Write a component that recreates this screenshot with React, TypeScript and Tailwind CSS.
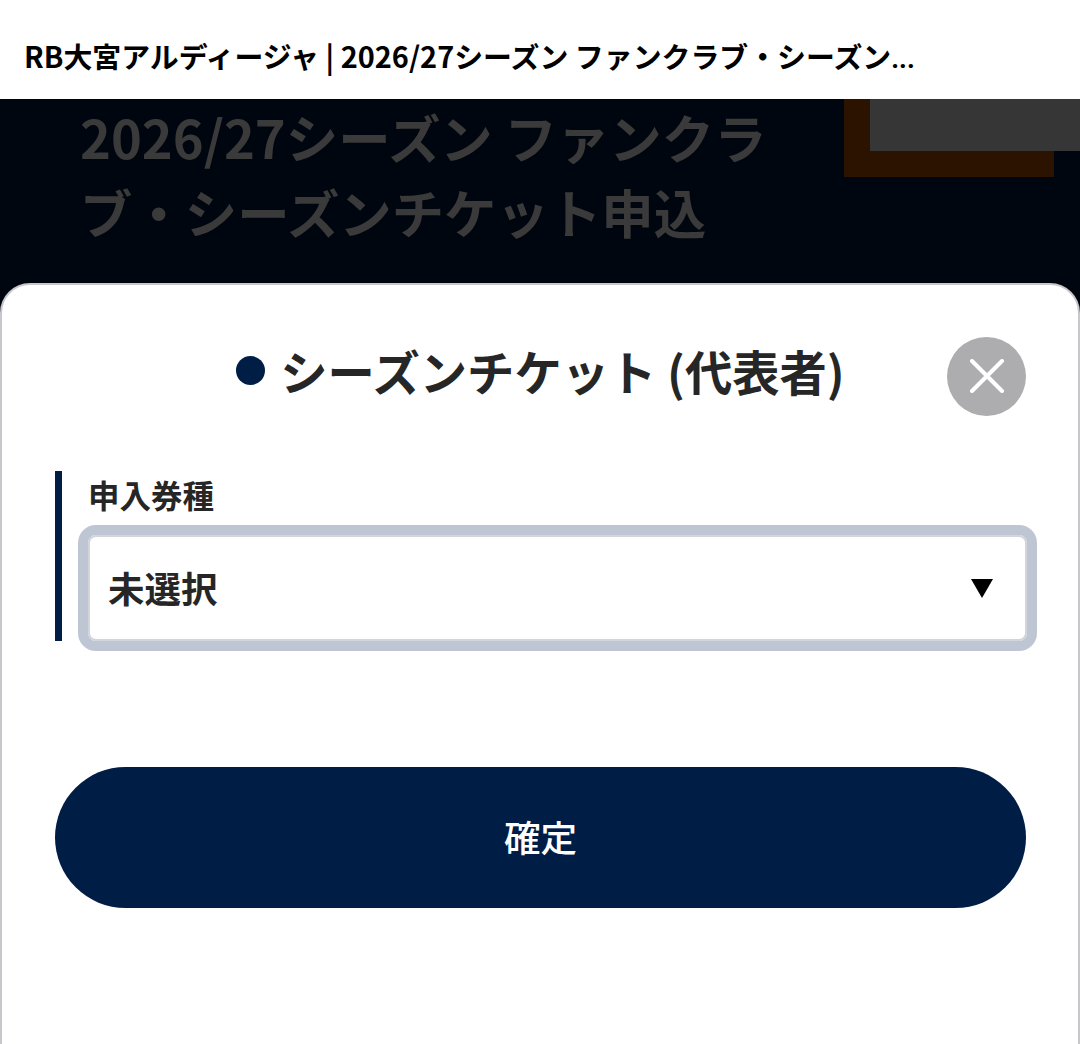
const jp = "font-['Noto_Sans_CJK_JP','Noto_Sans',sans-serif]";

const App = () => {
  return (
    <div className={`${jp} relative h-[1044px] w-[1080px] overflow-hidden bg-[#00060f]`}>
      {/* Browser title */}
      <header className="flex h-[99px] items-center bg-white pl-6 pt-[14px]">
        <p className="whitespace-nowrap text-[28.9px] font-bold leading-none text-black">
          RB大宮アルディージャ | 2026/27シーズン ファンクラブ・シーズン<span className="font-['Roboto',sans-serif] text-[27px]">...</span>
        </p>
      </header>

      {/* Dimmed page behind the sheet */}
      <div className="flex h-[184px] items-start justify-between overflow-hidden">
        <h1 className="w-[800px] shrink-0 pl-20 text-[52.4px] font-bold leading-[75px] text-[#3a3a3a]">
          2026/27シーズン ファンクラブ・シーズンチケット申込
        </h1>
        <div className="relative mr-[26px] h-[78px] w-[210px] bg-[#2b1300]">
          <div className="absolute left-[26px] top-0 h-[52px] w-[210px] bg-[#363636]" />
        </div>
      </div>

      {/* Sheet */}
      <section className="h-[800px] rounded-t-[30px] border-2 border-[#c8c8cc] bg-white pl-[53px] pr-[52px] pt-[1px]">
        <div className="relative flex h-[132px] items-start justify-center pt-[47px]">
          <span className="mr-[15px] mt-[23px] h-[29px] w-[29px] rounded-full bg-[#001e45]" />
          <h2 className="text-[47.3px] font-bold leading-[75px] text-[#262626]">
            シーズンチケット (代表者)
          </h2>
          <button className="absolute right-0 top-[51px] flex h-[79px] w-[79px] items-center justify-center rounded-full bg-[#adadb0] pb-[2px]">
            <svg width="34" height="34" viewBox="0 0 34 34" fill="none" stroke="white" strokeWidth="4" strokeLinecap="round">
              <path d="M2 2 L32 32 M32 2 L2 32" />
            </svg>
          </button>
        </div>

        <div className="mt-[53px] h-[170px] border-l-[7px] border-[#001e45] pl-[16px]">
          <label className="block h-[54px] pl-[10px] pt-[1px] text-[31.5px] font-bold leading-[44px] text-[#262626]">
            申入券種
          </label>
          <div className="flex h-[126px] w-[959px] items-center justify-between rounded-[18px] border-[10px] border-[#bfc6d3] bg-white pl-[20px] pr-[34px] shadow-[inset_0_0_0_2px_#d2d5db]">
            <span className="text-[36.5px] font-bold text-[#262626]">未選択</span>
            <svg width="22" height="20" viewBox="0 0 22 20" className="mt-[1px]">
              <polygon points="0,0 22,0 11,19" fill="black" />
            </svg>
          </div>
        </div>

        <button className="mt-[126px] h-[141px] w-[971px] rounded-full bg-[#001e45] pb-[1px] text-[36.5px] font-medium text-white">
          確定
        </button>
      </section>
    </div>
  );
};

export default App;
